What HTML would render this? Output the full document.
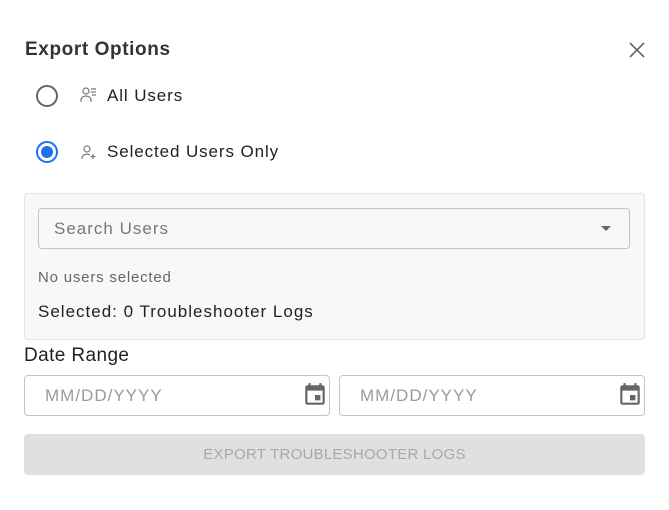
<!DOCTYPE html>
<html><head><style>
*{box-sizing:border-box;margin:0;padding:0}
body{width:669px;height:510px;background:#fff;font-family:"Liberation Sans",sans-serif;color:#222;position:relative;overflow:hidden}
.abs{position:absolute}
.title{left:25px;top:39px;font-size:19px;font-weight:bold;color:#333;letter-spacing:0.6px}
.radio{width:22px;height:22px;border-radius:50%;border:2px solid #666}
.lbl{font-size:17px;color:#222;letter-spacing:0.9px}
.panel{left:24px;top:193px;width:621px;height:147px;background:#f7f8fa;border:1px solid #e3e5e8;border-radius:4px}
.sel{left:38px;top:208px;width:592px;height:41px;border:1px solid #c4c4c4;border-radius:4px;background:#f7f8fa}
.inp{height:41px;border:1px solid #c4c4c4;border-radius:4px;top:375px}
.ph{color:#9a9a9a;font-size:17px;letter-spacing:1px}
.btn{left:24px;top:434px;width:621px;height:41px;background:#e0e0e0;border-radius:4px;color:#a8a8a8;font-size:15px;text-align:center;line-height:41px;letter-spacing:0.25px}
</style></head><body>
<div class="abs title">Export Options</div>
<svg class="abs" style="left:628px;top:41px" width="18" height="18" viewBox="0 0 18 18"><path d="M2 2L16 16M16 2L2 16" stroke="#666" stroke-width="1.6"/></svg>

<div class="abs radio" style="left:36px;top:85px"></div>
<svg class="abs" style="left:80px;top:86px" width="18" height="18" viewBox="0 0 18 18" fill="none" stroke="#777" stroke-width="1.2"><circle cx="6" cy="5" r="3"/><path d="M1 16v-2a5 4 0 0 1 10 0v2M11 3h5M11 6h5M12 9h4"/></svg>
<div class="abs lbl" style="left:107px;top:86px">All Users</div>

<div class="abs radio" style="left:36px;top:141px;border-color:#1a73e8"></div>
<div class="abs" style="left:41px;top:146px;width:12px;height:12px;border-radius:50%;background:#1a73e8"></div>
<svg class="abs" style="left:80px;top:143px" width="18" height="18" viewBox="0 0 18 18" fill="none" stroke="#777" stroke-width="1.2"><circle cx="7" cy="6" r="3"/><path d="M2 16v-1a5 4 0 0 1 8-3M13 11v5M10.5 13.5h5"/></svg>
<div class="abs lbl" style="left:107px;top:142px">Selected Users Only</div>

<div class="abs panel"></div>
<div class="abs sel"></div>
<div class="abs ph" style="left:54px;top:219px;color:#777">Search Users</div>
<svg class="abs" style="left:600px;top:225px" width="12" height="8"><path d="M1 1h10L6 6z" fill="#666"/></svg>
<div class="abs" style="left:38px;top:269px;font-size:15px;color:#666;letter-spacing:0.8px">No users selected</div>
<div class="abs" style="left:38px;top:302px;font-size:17px;color:#222;letter-spacing:1px">Selected: 0 Troubleshooter Logs</div>

<div class="abs" style="left:24px;top:345px;font-size:19px;color:#222;letter-spacing:0.4px">Date Range</div>
<div class="abs inp" style="left:24px;width:306px"></div>
<div class="abs ph" style="left:45px;top:386px">MM/DD/YYYY</div>
<svg class="abs" style="left:302px;top:382px" width="26" height="26" viewBox="0 0 24 24"><path fill="#666" d="M17 12h-5v5h5v-5zM16 1v2H8V1H6v2H5c-1.11 0-1.99.9-1.99 2L3 19c0 1.1.89 2 2 2h14c1.1 0 2-.9 2-2V5c0-1.1-.9-2-2-2h-1V1h-2zm3 18H5V8h14v11z"/></svg>
<div class="abs inp" style="left:339px;width:306px"></div>
<div class="abs ph" style="left:360px;top:386px">MM/DD/YYYY</div>
<svg class="abs" style="left:617px;top:382px" width="26" height="26" viewBox="0 0 24 24"><path fill="#666" d="M17 12h-5v5h5v-5zM16 1v2H8V1H6v2H5c-1.11 0-1.99.9-1.99 2L3 19c0 1.1.89 2 2 2h14c1.1 0 2-.9 2-2V5c0-1.1-.9-2-2-2h-1V1h-2zm3 18H5V8h14v11z"/></svg>

<div class="abs btn">EXPORT TROUBLESHOOTER LOGS</div>
</body></html>
